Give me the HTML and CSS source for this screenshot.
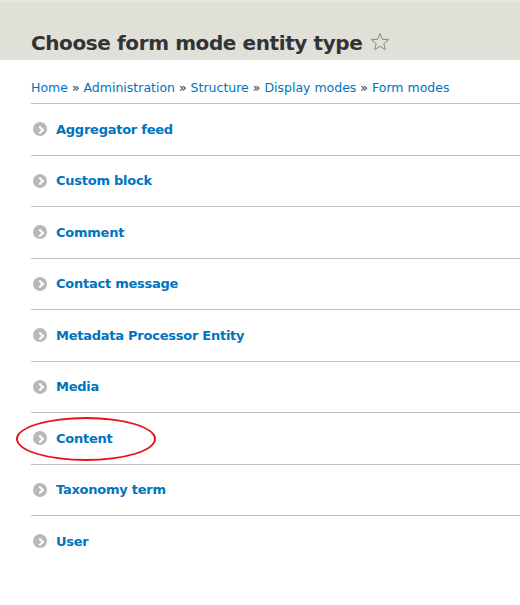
FILE: index.html
```html
<!DOCTYPE html>
<html>
<head>
<meta charset="utf-8">
<link rel="stylesheet" href="styles.css">
</head>
<body>
<header class="head">
  <h1 class="title">Choose form mode entity type
    <svg class="star" width="20" height="20" viewBox="0 0 20 20"><path d="M10 1.5 L12.4 7.3 L18.6 7.7 L13.8 11.6 L15.4 17.7 L10 14.3 L4.6 17.7 L6.2 11.6 L1.4 7.7 L7.6 7.3 Z" fill="none" stroke="#8a8a84" stroke-width="1" stroke-linejoin="round"/></svg>
  </h1>
</header>
<main class="content">
  <nav class="crumbs"><a href="#">Home</a> » <a href="#">Administration</a> » <a href="#">Structure</a> » <a href="#">Display modes</a> » <a href="#">Form modes</a></nav>
  <ul class="list">
    <li class="item"><span class="ico"></span><a href="#">Aggregator feed</a></li>
    <li class="item"><span class="ico"></span><a href="#">Custom block</a></li>
    <li class="item"><span class="ico"></span><a href="#">Comment</a></li>
    <li class="item"><span class="ico"></span><a href="#">Contact message</a></li>
    <li class="item"><span class="ico"></span><a href="#">Metadata Processor Entity</a></li>
    <li class="item"><span class="ico"></span><a href="#">Media</a></li>
    <li class="item marked"><span class="ico"></span><a href="#">Content</a><span class="ring"></span></li>
    <li class="item"><span class="ico"></span><a href="#">Taxonomy term</a></li>
    <li class="item"><span class="ico"></span><a href="#">User</a></li>
  </ul>
</main>
</body>
</html>
```
FILE: styles.css
```css
html, body { margin: 0; padding: 0; background: #fff; }
body { font-family: "DejaVu Sans", "Liberation Sans", sans-serif; color: #333; }
.head {
  background: #e0e0d8;
  border-top: 2px solid #e6e6e1;
  height: 58px;
  padding: 0 0 0 31px;
  box-sizing: content-box;
}
.title {
  margin: 0;
  padding-top: 26px;
  font-size: 20px;
  font-weight: bold;
  line-height: 30px;
  color: #333;
  letter-spacing: -0.4px;
  display: flex;
  align-items: center;
  gap: 8px;
}
.star { margin-top: -3px; }
.content { padding-left: 31px; }
.crumbs {
  font-size: 12.5px;
  line-height: 16px;
  padding-top: 20px;
  padding-bottom: 7px;
  color: #333;
}
.crumbs a { color: #0074bd; text-decoration: none; }
.list {
  list-style: none;
  margin: 0;
  padding: 0;
  border-top: 1px solid #bfbfbf;
}
.item {
  position: relative;
  display: flex;
  align-items: center;
  height: 50.5px;
  border-bottom: 1px solid #bfbfbf;
  padding-left: 2px;
}
.item:last-child { border-bottom: none; }
.item a {
  color: #0074bd;
  font-weight: bold;
  font-size: 13px;
  letter-spacing: -0.25px;
  text-decoration: none;
  margin-left: 9px;
}
.ico {
  width: 14px;
  height: 14px;
  border-radius: 50%;
  background: #b8b8b8;
  position: relative;
  flex: none;
}
.ico::after {
  content: "";
  position: absolute;
  left: 3.5px;
  top: 4.5px;
  width: 4px;
  height: 4px;
  border-right: 2px solid #fff;
  border-top: 2px solid #fff;
  transform: rotate(45deg);
}
.ring {
  position: absolute;
  left: -15px;
  top: 4px;
  width: 140px;
  height: 44px;
  border: 2.5px solid #e8111a;
  border-radius: 50%;
  box-sizing: border-box;
}
```
